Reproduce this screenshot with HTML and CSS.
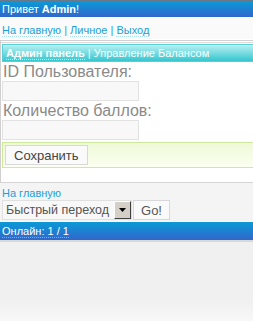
FILE: index.html
```html
<!DOCTYPE html>
<html lang="ru">
<head>
  <meta charset="UTF-8">
  <title>Управление Балансом</title>
  <link rel="stylesheet" href="styles.css">
</head>
<body>
  <div class="topbar">Привет <b>Admin</b>!</div>

  <div class="nav">
    <a href="#">На главную</a> | <a href="#">Личное</a> | <a href="#">Выход</a>
  </div>

  <div class="box">
    <div class="box-inner">
      <div class="panel-head">
        <a href="#" class="head-link">Админ панель</a> | Управление Балансом
      </div>
      <form class="panel-body">
        <label class="label" for="userId">ID Пользователя:</label>
        <input type="text" id="userId" class="field">
        <label class="label" for="points">Количество баллов:</label>
        <input type="text" id="points" class="field">
        <div class="submit-row">
          <button type="button" class="btn">Сохранить</button>
        </div>
      </form>
    </div>
  </div>

  <div class="footer-nav">
    <a href="#" class="home">На главную</a>
    <div class="jump">
      <span class="select-wrap">
        <select class="select">
          <option>Быстрый переход</option>
        </select>
        <span class="arrow"><svg width="9" height="5" viewBox="0 0 9 5"><path d="M1 0h7L4.5 4z" fill="#000"/></svg></span>
      </span>
      <button type="button" class="btn go">Go!</button>
    </div>
  </div>

  <div class="online"><a href="#">Онлайн: 1 / 1</a></div>
  <div class="bottom"></div>
</body>
</html>
```

FILE: styles.css
```css
html, body {
  margin: 0;
  padding: 0;
}

body {
  font-family: "Liberation Sans", Arial, sans-serif;
  font-size: 11px;
  background: #f0f0f0;
  color: #333;
}

a {
  color: #1aa0d8;
  text-decoration: none;
}

.topbar {
  height: 17px;
  line-height: 17px;
  padding-left: 2px;
  color: #fff;
  background: linear-gradient(#0a9ad6, #3266cc);
  border-top: 1px solid #6a7a8a;
  box-sizing: border-box;
}

.nav {
  background: #fafafa;
  padding: 7px 2px 3px;
  height: 12px;
  line-height: 12px;
  color: #1aa0d8;
  border-bottom: 1px solid #fff;
}

.nav a {
  border-bottom: 1px dotted #a8dcee;
}

.box {
  background: #fff;
  border-top: 1px solid #d0d0d0;
  border-left: 1px solid #d0d0d0;
  padding-top: 1px;
}

.box-inner {
  border-top: 1px solid #dcdcdc;
  padding: 1px 0 14px 1px;
  border-bottom: 1px solid #d4d4d4;
}

.panel-head {
  height: 16px;
  line-height: 16px;
  padding-left: 3px;
  color: #fff;
  background: linear-gradient(#b8f0f2, #36c6cf);
  border: 1px solid #5ccfd6;
  border-right: none;
}

.head-link {
  color: #fff;
  font-weight: bold;
  border-bottom: 1px dotted #e0f8fa;
}

.panel-body {
  display: flex;
  flex-direction: column;
  align-items: flex-start;
  margin: 0;
}

.label {
  font-size: 16px;
  color: #8a8a8a;
  line-height: 19px;
  padding-left: 1px;
}

.field {
  width: 137px;
  height: 20px;
  box-sizing: border-box;
  margin: 0;
  border: 1px solid #e2e2e2;
  background: #f8f8f8;
}

.submit-row {
  align-self: stretch;
  margin-top: 2px;
  padding: 2px;
  border: 1px solid #cfe99c;
  border-right: none;
  background: linear-gradient(#eef9d8, #fbfff0);
}

.btn {
  font-family: "Liberation Sans", Arial, sans-serif;
  font-size: 13px;
  color: #444;
  background: #fafafa;
  border: 1px solid #d8d8d8;
  height: 20px;
  padding: 0 8px;
}

.footer-nav {
  padding: 4px 2px 1px;
  background: #f4f4f4;
}

.home {
  display: block;
  line-height: 12px;
}

.jump {
  display: flex;
  align-items: center;
  gap: 1px;
  margin-top: 1px;
}

.select-wrap {
  display: inline-flex;
  align-items: stretch;
  border: 1px solid #e0e0e0;
  background: #f8f8f8;
  height: 20px;
  box-sizing: border-box;
}

.select {
  appearance: none;
  -webkit-appearance: none;
  border: none;
  background: transparent;
  font-family: "Liberation Sans", Arial, sans-serif;
  font-size: 12.5px;
  color: #555;
  padding: 0 0 0 3px;
  margin: 0;
  width: 111px;
}

.arrow {
  width: 17px;
  display: flex;
  align-items: center;
  justify-content: center;
  background: #d4d0c8;
  border: 1px solid;
  border-color: #fff #404040 #404040 #fff;
  box-sizing: border-box;
}

.go {
  width: 37px;
  padding: 0;
  font-size: 13px;
  color: #555;
}

.online {
  height: 18px;
  line-height: 18px;
  padding-left: 2px;
  background: linear-gradient(#0a9ad6, #3266cc);
  border-top: 1px solid #fff;
}

.online a {
  color: #fff;
  border-bottom: 1px dotted #c8a060;
}

.bottom {
  height: 79px;
  border-top: 2px solid #d8d8d8;
  background: linear-gradient(#f0f0f0 0, #f0f0f0 75%, #f8f8f8 100%);
}
```
